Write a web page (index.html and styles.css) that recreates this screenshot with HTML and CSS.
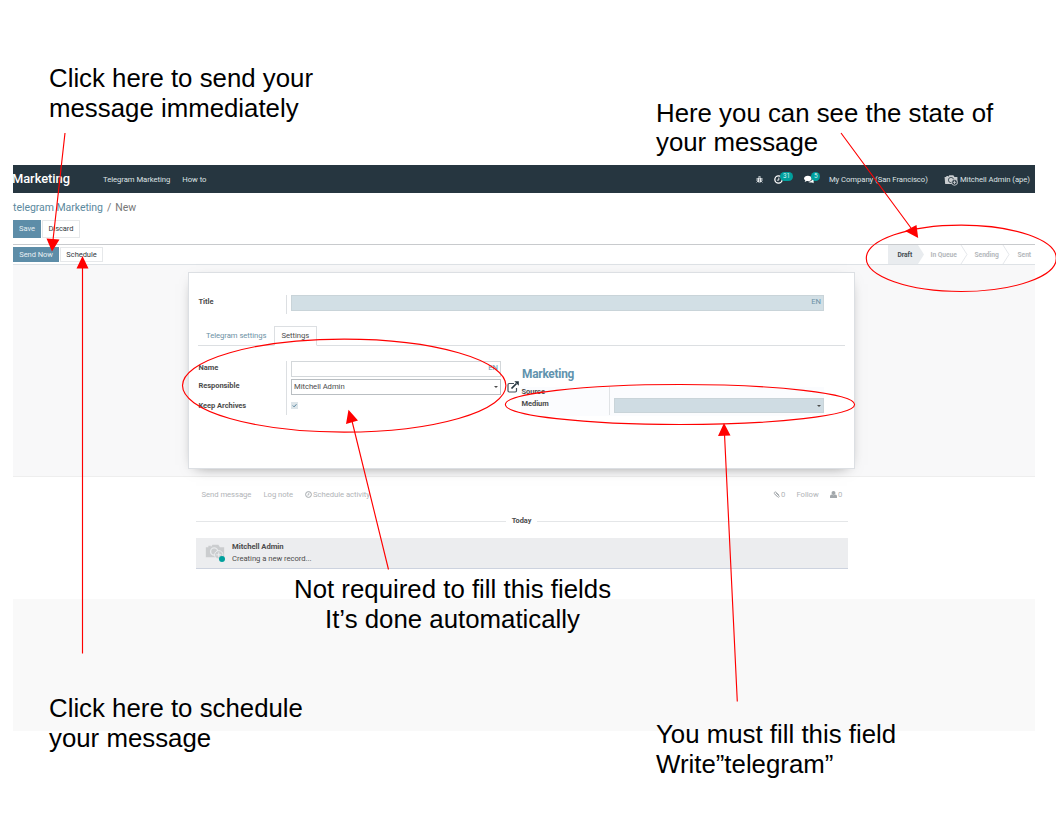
FILE: index.html
```html
<!DOCTYPE html>
<html lang="en">
<head>
<meta charset="utf-8">
<title>Telegram Marketing guide</title>
<link rel="stylesheet" href="styles.css">
</head>
<body>
<main class="slide">
  <section class="app">
    <header class="navbar">
      <h1 class="brand"><span>Marketing</span></h1>
      <nav class="menu"><a><span>Telegram Marketing</span></a><a><span>How to</span></a></nav>
      <div class="systray">
        <svg class="ic-bug" viewBox="0 0 14 14"><path d="M4 3a3 2.500 0 0 1 6 0zM3 4h8v6a4 3 0 0 1-8 0z" fill="#e4e8ea"/><path d="M1 4l2 2M13 4l-2 2M0 8h3M11 8h3M1 13l3-3M13 13l-3-3" stroke="#e4e8ea" stroke-width="1.500"/><path d="M7 5v7" stroke="#263640"/></svg>
        <span class="tray tray-clock">
          <svg viewBox="0 0 14 14"><circle cx="7" cy="7" r="5.700" fill="none" stroke="#fff" stroke-width="2"/><path d="M7.500 4v4H4.500" fill="none" stroke="#fff" stroke-width="1.400"/></svg>
          <b class="badge">31</b>
        </span>
        <span class="tray tray-chat">
          <svg viewBox="0 0 16 14"><path d="M6 1c3.500 0 6 1.800 6 4.300S9.500 9.500 6 9.500c-.6 0-1 0-1.600-.1L1 11l1-2.700C.8 7.500 0 6.500 0 5.300 0 2.800 2.700 1 6 1z" fill="#fff"/><path d="M13.500 5c1.500.8 2.500 1.800 2.500 3 0 1-.6 2-1.600 2.600L15.500 13l-3.200-1.300c-3 .4-5.300-.2-6.300-1.200 4 .3 7.500-2 7.500-5.500z" fill="#fff"/></svg>
          <b class="badge">5</b>
        </span>
        <span class="company">My Company (San Francisco)</span>
        <svg class="ic-cam" viewBox="0 0 24 20"><path d="M1 5h3V3h3v2l2-3h7l2 3h5v12H2z" fill="#c9cdd0"/><circle cx="12" cy="10" r="4.500" fill="none" stroke="#263640" stroke-width="1.300"/><circle cx="18" cy="14" r="5" fill="#263640" stroke="#c9cdd0" stroke-width="1.500"/><path d="M18 11v6M15 14h6" stroke="#c9cdd0" stroke-width="1.500"/></svg>
        <span class="user">Mitchell Admin (ape)</span>
      </div>
    </header>

    <div class="control-panel">
      <div class="breadcrumb"><a>telegram Marketing</a><i>/</i><span>New</span></div>
      <div class="buttons"><button class="btn primary save">Save</button><button class="btn discard">Discard</button></div>
    </div>

    <div class="statusbar">
      <button class="btn primary send">Send Now</button><button class="btn schedule">Schedule</button>
      <div class="states">
        <span class="state current">Draft</span>
        <span class="state queue">In Queue</span>
        <span class="state sending">Sending</span>
        <span class="state sent">Sent</span>
        <svg class="chevrons" viewBox="0 0 147 19"><path d="M0 0h30l6 9.500-6 9.500H0z" fill="#e9ecef"/><path d="M73 0l6 9.500-6 9.500M115 0l6 9.500-6 9.500" fill="none" stroke="#dee2e6" stroke-width=".8"/></svg>
      </div>
    </div>

    <div class="sheet-bg">
      <div class="sheet">
        <div class="title-row">
          <label>Title</label>
          <div class="cell"><div class="field required"><em>EN</em></div></div>
        </div>
        <div class="tabs"><span class="tab link">Telegram settings</span><span class="tab active">Settings</span></div>
        <div class="columns">
          <div class="group">
            <div class="labels"><label>Name</label><label>Responsible</label><label>Keep Archives</label></div>
            <div class="cell inputs">
              <div class="field"><em>EN</em></div>
              <div class="field select">Mitchell Admin<i class="caret"></i></div>
              <div class="check"><svg viewBox="0 0 8 8"><path d="M2 4l1.500 1.500L6.200 2.600" fill="none" stroke="#4c7c98" stroke-width="1.100"/></svg></div>
            </div>
          </div>
          <svg class="ic-ext" viewBox="0 0 12 12"><path d="M7 2.500H2.200Q1 2.500 1 3.700v6.100Q1 11 2.200 11h6.100q1.200 0 1.200-1.200V7" fill="none" stroke="#44525c" stroke-width="1.200"/><path d="M4.500 7.500l5-5" stroke="#263640" stroke-width="1.700"/><path d="M7.300.3H11.800V4.800z" fill="#263640"/></svg>
          <div class="marketing">
            <h2>Marketing</h2>
            <div class="mbody">
              <div class="mlabels"><label>Source</label><label>Medium</label></div>
              <div class="mcell"><div class="field required select"><i class="caret"></i></div></div>
            </div>
          </div>
        </div>
      </div>
    </div>

    <div class="chatter">
      <div class="topbar">
        <span class="send-msg">Send message</span><span class="log">Log note</span>
        <span class="activity"><svg viewBox="0 0 14 14"><circle cx="7" cy="7" r="5.800" fill="none" stroke="#9ea3a8" stroke-width="1.900"/><path d="M7.500 3.500V8H4.500" fill="none" stroke="#9ea3a8" stroke-width="1.400"/></svg>Schedule activity</span>
        <span class="clip"><svg viewBox="0 0 14 14"><path d="M12 8L6.500 2.500a2 2 0 0 0-3.500 3L9.500 12a1.800 1.800 0 0 0 2.700-2.600L6 4M3 5.500l6 6M5 3l7 7" fill="none" stroke="#a2a7ab" stroke-width="1.600"/></svg>0</span>
        <span class="follow">Follow</span>
        <span class="people"><svg viewBox="0 0 14 14"><circle cx="7" cy="4" r="4" fill="#a2a7ab"/><path d="M0 14v-3q0-4 3-4l4 1.500L11 7q3 0 3 4v3z" fill="#a2a7ab"/></svg>0</span>
      </div>
      <div class="today"><span>Today</span></div>
      <div class="message">
        <div class="avatar"><svg viewBox="0 0 24 20"><path d="M1 5h3V3h3v2l2-3h7l2 3h5v12H1z" fill="#cbcdcf"/><circle cx="11" cy="10" r="4.300" fill="none" stroke="#e9ebed" stroke-width="1.600"/><circle cx="16.500" cy="14" r="5" fill="#cbcdcf" stroke="#eceef0" stroke-width="1.200"/><path d="M16.500 11v6M13.500 14h6" stroke="#eceef0" stroke-width="1.200"/></svg><i class="online"></i></div>
        <div class="msg-text"><strong>Mitchell Admin</strong><span>Creating a new record...</span></div>
      </div>
    </div>
    <div class="footer"></div>
  </section>

  <svg class="marks" viewBox="0 0 1056 816">
    <g fill="none" stroke="#f00" stroke-width="1.150">
      <ellipse cx="344.200" cy="385.600" rx="161.700" ry="46.500"/>
      <ellipse cx="680" cy="404.500" rx="174.600" ry="20"/>
      <ellipse cx="961.300" cy="258.300" rx="95" ry="33.200"/>
      <path d="M65 133L53 240M82.500 653.500V266M841 133L911 228M388.500 569.500L352 421M737.300 701.500L724.500 434"/>
    </g>
    <path fill="#f00" d="M52 251.500L46.500 238.500 59.500 239.500zM82.500 256L88.500 268.500H76.500zM918.200 238L905 231 916.500 225zM348.500 409.700L346 424 358 420.500zM724 423L718 436 730.500 435.500z"/>
  </svg>
  <p class="note n1"><span>Click here to send your</span><br><span>message immediately</span></p>
  <p class="note n2"><span>Here you can see the state of</span><br><span>your message</span></p>
  <p class="note n3"><span>Not required to fill this fields</span><br><span>It’s done automatically</span></p>
  <p class="note n4"><span>Click here to schedule</span><br><span>your message</span></p>
  <p class="note n5"><span>You must fill this field</span><br><span>Write”telegram”</span></p>
</main>
</body>
</html>
```
FILE: styles.css
```css
* { box-sizing: border-box; }
body { margin: 0; background: #fff; }
.slide { position: relative; width: 1056px; height: 816px; padding: 165px 21px 0 13px; overflow: hidden; }
.app { font: 7.7px/10px Roboto, sans-serif; letter-spacing: -.05px; color: #4c4c4c; height: 566px; display: flex; flex-direction: column; white-space: nowrap; }
h1, h2, p { margin: 0; }
svg { display: block; flex: none; }
i, em { font-style: normal; }

/* top bar */
.navbar { height: 28px; background: #263640; display: flex; align-items: center; color: #dfe3e5; overflow: hidden; flex: none; padding-top: 1px; }
.brand { font-size: 12.9px; font-weight: 500; color: #fff; width: 90px; margin: -1px 0 0 -1px; line-height: 16px; }
.menu { display: flex; gap: 12px; margin-left: 1px; }
.systray { margin-left: auto; display: flex; align-items: center; padding-right: 5px; }
.ic-bug { width: 7px; height: 7px; margin: -1px 11px 0 0; }
.tray { position: relative; height: 9px; margin-top: -1px; }
.tray-clock { width: 30px; }
.tray-chat { width: 25px; }
.tray svg { height: 9px; }
.badge { position: absolute; left: 6px; top: -3px; height: 9px; padding: 0 3px; border-radius: 5px; background: #00a09d; color: #d9f1f0; font-size: 6.4px; line-height: 9px; font-weight: 400; }
.tray-chat .badge { left: 7px; }
.company { width: 116px; }
.ic-cam { width: 14px; height: 12px; margin: 0 2px 0 -1px; }

/* breadcrumb and buttons */
.control-panel { height: 52px; border-bottom: 1px solid #c8cacd; padding-top: 8px; flex: none; }
.breadcrumb { font-size: 10.5px; line-height: 14px; color: #777; display: flex; gap: 4px; }
.breadcrumb a { color: #5b899e; }
.buttons { display: flex; gap: 1px; margin-top: 5px; }
.btn { font: 7.5px/10px Roboto, sans-serif; letter-spacing: -.05px; color: #333b42; background: #fff; border: 1px solid #e6e8ea; padding: 0; height: 18px; }
.btn.primary { background: #5d8da8; border-color: #5d8da8; color: #e6eef2; }
.save { width: 28px; }
.discard { width: 38px; }

/* status bar */
.statusbar { height: 20px; border-bottom: 1px solid #dee2e6; display: flex; gap: 1px; align-items: center; flex: none; }
.statusbar .btn { height: 15px; line-height: 12px; }
.send { width: 46px; }
.schedule { width: 43px; }
.states { position: relative; width: 147px; height: 19px; margin: 0 0 0 auto; display: flex; align-items: center; font-weight: 700; font-size: 6.7px; color: #b4b8bc; }
.state { position: relative; z-index: 1; }
.current { color: #444c54; width: 42.500px; padding-left: 9.500px; }
.queue { width: 44px; }
.sending { width: 43px; }
.chevrons { position: absolute; inset: 0; width: 147px; height: 19px; }

/* form sheet */
.sheet-bg { height: 212px; background: #f8f8f9; border-bottom: 1px solid #eee; padding: 7px 0 0 175px; flex: none; }
.sheet { width: 667px; height: 197px; background: #fff; border: 1px solid #dcdfe3; box-shadow: 0 4px 14px -8px rgba(0,0,0,.6); padding: 22px 9px 0; }
label { font-weight: 700; font-size: 7.5px; line-height: 13px; display: block; }
.title-row { display: flex; height: 31px; width: 626px; }
.title-row label { width: 88px; padding-left: .5px; }
.cell { border-left: 1px solid #dcdfe2; padding-left: 4px; flex: 1; }
.title-row .cell { height: 19px; }
.field { height: 16px; border: 1px solid #d3d7da; display: flex; justify-content: space-between; padding: 0 2px; line-height: 14px; }
.field em { margin-left: auto; color: #6b91a6; line-height: 12px; }
.required { background: #d2dfe5; border-color: #c9d4d9; }
.tabs { height: 20px; border-bottom: 1px solid #dcdfe2; display: flex; line-height: 20px; }
.tab.link { width: 76px; padding-left: 8px; color: #6d91a5; }
.tab.active { width: 43px; height: 20px; border: 1px solid #dcdfe2; border-bottom-color: #fff; padding-left: 6.500px; background: #fff; line-height: 18px; }
.columns { display: flex; padding-top: 15px; }
.group { display: flex; width: 303px; height: 54px; }
.labels { width: 88px; padding-left: .5px; display: grid; grid-template-rows: 18px 20px 12px; }
.inputs { display: grid; grid-template-rows: 16px 16px 8px; row-gap: 2px; }
.group .select { border-color: #b9bec2; }
.select { align-items: center; }
.caret { border: 2px solid transparent; border-top-color: #4c4c4c; border-bottom: 0; margin-left: auto; }
.check { width: 7px; height: 7px; margin-top: 5px; background: #dde5e9; }
.ic-ext { width: 12px; height: 12px; margin: 20px 0 0 6px; }
.marketing { width: 303px; margin-left: 2px; padding-top: 4px; }
h2 { font-size: 11.9px; line-height: 18px; font-weight: 700; color: #6193ae; padding-left: 1px; height: 22px; letter-spacing: -.25px; }
.mbody { display: flex; background: #fbfcfe; height: 29px; }
.mlabels { width: 89px; padding-left: .5px; border-right: 1px solid #e0e3e6; height: 28px; }
.mlabels label { line-height: 12px; position: relative; top: -1px; }
.mcell { flex: 1; padding: 11px 0 0 4px; }
.mcell .field { height: 15px; background: #cfdce3; }

/* chatter */
.chatter { height: 122px; padding: 11px 187.500px 0 182.500px; flex: none; }
.topbar { display: flex; height: 12px; line-height: 13px; color: #b1b4b7; padding-left: 6px; }
.send-msg { width: 62px; }
.log { width: 41px; }
.topbar svg { width: 7px; height: 7px; margin: 2.500px 1.500px 0 0; }
.activity, .clip, .people { display: flex; }
.clip { margin-left: auto; width: 24px; }
.follow { width: 33px; }
.people { width: 18px; }
.today { display: flex; align-items: center; gap: 6px; margin-top: 15px; height: 12px; line-height: 12px; font-weight: 700; font-size: 7.4px; }
.today::before, .today::after { content: ""; height: 1px; background: #e4e6e8; flex: 1; }
.message { height: 31px; margin-top: 11px; background: #ecedef; border-bottom: 1px solid #cdd3df; display: flex; padding: 3px 0 0 9px; }
.avatar { position: relative; width: 27.500px; padding-top: 2px; }
.avatar svg { width: 20px; height: 17px; }
.online { position: absolute; left: 14px; top: 15px; width: 6px; height: 6px; border-radius: 3px; background: #00a09d; }
.msg-text { display: flex; flex-direction: column; line-height: 12px; }
.footer { flex: 1; background: #f9f9f9; }

/* annotations over the window */
.marks { position: absolute; inset: 0; width: 1056px; height: 816px; }
.note { position: absolute; font: 25.82px/30px "Liberation Sans", Arial, sans-serif; color: #000; white-space: nowrap; }
.n1 { left: 49px; top: 63px; }
.n2 { left: 656px; top: 99px; line-height: 29px; }
.n3 { left: 294px; top: 574px; width: 317px; text-align: center; }
.n4 { left: 49px; top: 693px; }
.n5 { left: 656px; top: 719px; }
```
